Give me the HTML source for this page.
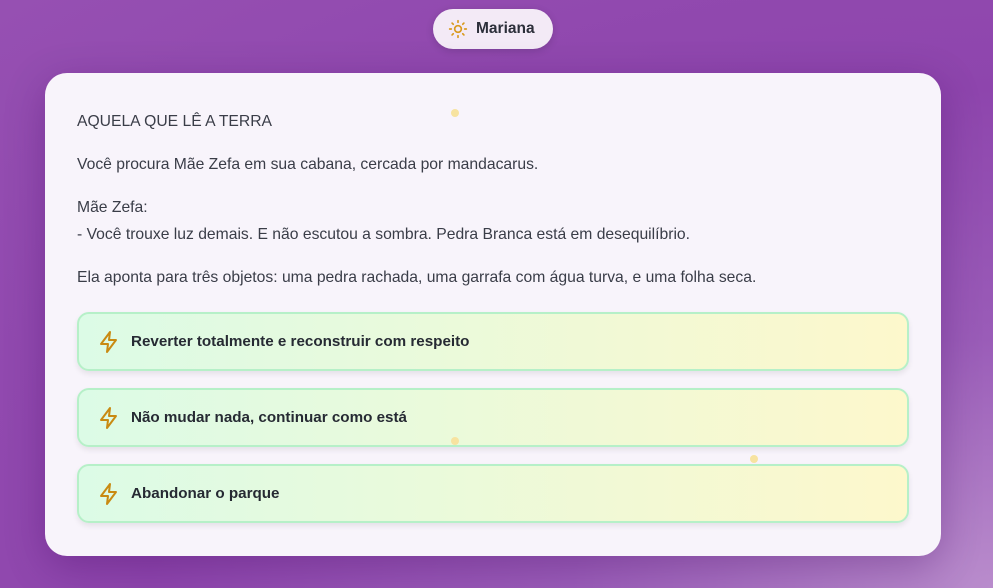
<!DOCTYPE html>
<html><head><meta charset="utf-8"><style>
*{box-sizing:border-box;margin:0;padding:0}
html,body{width:993px;height:588px;overflow:hidden}
body{font-family:"Liberation Sans","DejaVu Sans",sans-serif;background:radial-gradient(ellipse at 100% 100%,#b98ccc 0%,#9a5cb8 30%,#8e45ad 60%,#9650b2 100%);position:relative}
.pill{position:absolute;left:433px;top:9px;width:120px;height:40px;border-radius:20px;background:#f3eaf6;display:flex;align-items:center;padding-left:15px;gap:8px;font-size:15.5px;font-weight:bold;color:#2c2f3a;box-shadow:0 2px 8px rgba(0,0,0,.15)}
.card{position:absolute;left:45px;top:73px;width:896px;height:483px;border-radius:22px;background:#f8f4fb;box-shadow:0 10px 40px rgba(60,0,90,.3);padding:38px 32px 0 32px;color:#3a3d48;font-size:15.7px}
.card p{margin-bottom:16px;line-height:27px}
.opt{height:59px;border:2px solid #b6f0c8;border-radius:12px;background:linear-gradient(90deg,#dcfbe6,#fdf8cc);display:flex;align-items:center;padding-left:18px;gap:10px;font-weight:bold;font-size:15.2px;color:#262a33;margin-bottom:17px;box-shadow:0 3px 6px rgba(0,0,0,.08)}
.dot{position:absolute;width:8px;height:8px;border-radius:50%;background:#f7e3a0}
</style></head><body>
<div class="pill"><svg width="20" height="20" viewBox="0 0 24 24" fill="none" stroke="#d99a1e" stroke-width="2" stroke-linecap="round"><circle cx="12" cy="12" r="4"/><path d="M12 2v2M12 20v2M2 12h2M20 12h2M4.9 4.9l1.4 1.4M17.7 17.7l1.4 1.4M4.9 19.1l1.4-1.4M17.7 6.3l1.4-1.4"/></svg>Mariana</div>
<div class="card">
<p style="margin-top:-3px">AQUELA QUE LÊ A TERRA</p>
<p>Você procura Mãe Zefa em sua cabana, cercada por mandacarus.</p>
<p>Mãe Zefa:<br>- Você trouxe luz demais. E não escutou a sombra. Pedra Branca está em desequilíbrio.</p>
<p style="margin-bottom:21px">Ela aponta para três objetos: uma pedra rachada, uma garrafa com água turva, e uma folha seca.</p>
<div class="opt"><svg width="24" height="24" viewBox="0 0 24 24" fill="none" stroke="#c98a12" stroke-width="2" stroke-linejoin="round"><path d="M13 2L4 14h7l-1 8 9-12h-7z"/></svg>Reverter totalmente e reconstruir com respeito</div>
<div class="opt"><svg width="24" height="24" viewBox="0 0 24 24" fill="none" stroke="#c98a12" stroke-width="2" stroke-linejoin="round"><path d="M13 2L4 14h7l-1 8 9-12h-7z"/></svg>Não mudar nada, continuar como está</div>
<div class="opt"><svg width="24" height="24" viewBox="0 0 24 24" fill="none" stroke="#c98a12" stroke-width="2" stroke-linejoin="round"><path d="M13 2L4 14h7l-1 8 9-12h-7z"/></svg>Abandonar o parque</div>
</div>
<div class="dot" style="left:451px;top:109px"></div>
<div class="dot" style="left:451px;top:437px"></div>
<div class="dot" style="left:750px;top:455px"></div>
</body></html>
